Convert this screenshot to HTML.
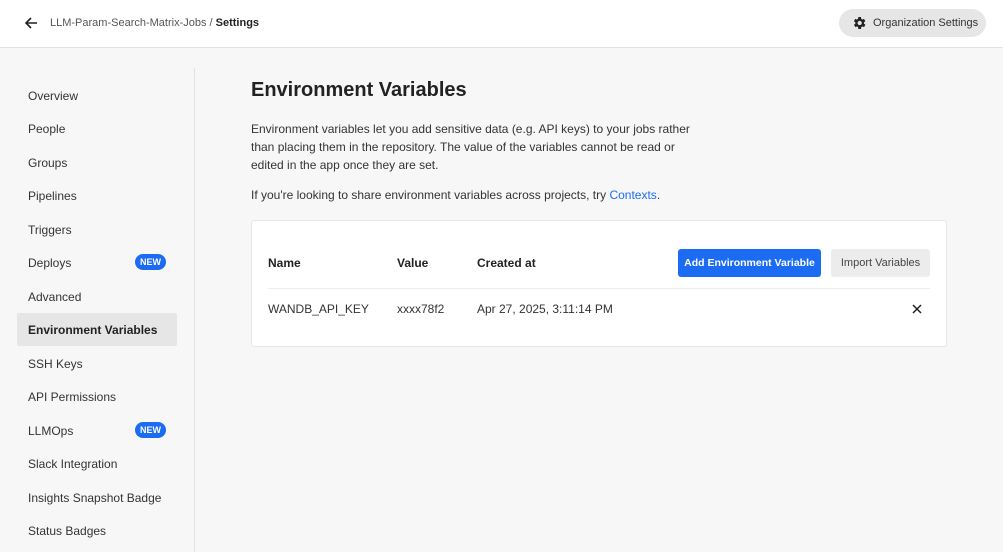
<!DOCTYPE html><html><head><style>
*{margin:0;padding:0;box-sizing:border-box}
body{width:1003px;height:552px;overflow:hidden;background:#f7f7f7;font-family:"Liberation Sans",sans-serif;color:#222;position:relative}
.hdr{position:absolute;left:0;top:0;width:1003px;height:48px;background:#fff;border-bottom:1px solid #e2e2e2}
.bc{position:absolute;left:50px;top:17px;font-size:11px;color:#555}
.bc b{color:#222}
.org{position:absolute;left:839px;top:9px;width:147px;height:28px;border-radius:14px;background:#e6e6e6;font-size:11px;color:#333;padding:8px 0 0 34px}
.side{position:absolute;left:194px;top:68px;width:1px;height:484px;background:#e2e2e2}
.it{position:absolute;left:17px;width:160px;height:33px;font-size:12px;color:#333;padding:10px 0 0 11px}
.it.a{background:#e6e6e6;font-weight:bold;color:#222;border-radius:2px}
.new{position:absolute;left:118px;top:8px;width:31px;height:16px;border-radius:8px;background:#1b6cf2;color:#fff;font-size:9px;font-weight:bold;text-align:center;line-height:16px}
h1{position:absolute;left:251px;top:79px;font-size:20px;font-weight:bold;color:#222}
.p{position:absolute;left:251px;font-size:12px;line-height:18px;color:#333;width:445px}
.p a{color:#1b6cf2;text-decoration:none}
.card{position:absolute;left:251px;top:220px;width:696px;height:127px;background:#fff;border:1px solid #e6e6e6;border-radius:3px}
.t{position:absolute;font-size:12px;color:#333}
.th{font-weight:bold;color:#222}
.btn1{position:absolute;left:426px;top:28px;width:143px;height:28px;background:#1b6cf2;border-radius:3px;color:#fff;font-size:10.5px;font-weight:bold;text-align:center;line-height:28px}
.btn2{position:absolute;left:579px;top:28px;width:99px;height:28px;background:#ececec;border-radius:3px;color:#444;font-size:11px;text-align:center;line-height:28px}
.ln{position:absolute;left:16px;top:67px;width:662px;height:1px;background:#eee}
</style></head><body>
<div class="hdr">
<svg style="position:absolute;left:24px;top:16px" width="14" height="14" viewBox="0 0 14 14"><path d="M13 7H2M7 2L2 7l5 5" fill="none" stroke="#222" stroke-width="1.6"/></svg>
<div class="bc">LLM-Param-Search-Matrix-Jobs / <b>Settings</b></div>
<div class="org"><svg style="position:absolute;left:12px;top:6px" width="16" height="16" viewBox="0 0 24 24"><path fill="#222" d="M19.4 13a7.5 7.5 0 000-2l2.1-1.6-2-3.5-2.5 1a7.3 7.3 0 00-1.7-1L15 3h-4l-.4 2.9a7.3 7.3 0 00-1.7 1l-2.5-1-2 3.5L6.6 11a7.5 7.5 0 000 2l-2.1 1.6 2 3.5 2.5-1a7.3 7.3 0 001.7 1L11 21h4l.4-2.9a7.3 7.3 0 001.7-1l2.5 1 2-3.5zM13 15.2a3.2 3.2 0 110-6.4 3.2 3.2 0 010 6.4z"/></svg>Organization Settings</div>
</div>
<div class="side"></div>
<div class="it" style="top:79px">Overview</div>
<div class="it" style="top:112px">People</div>
<div class="it" style="top:146px">Groups</div>
<div class="it" style="top:179px">Pipelines</div>
<div class="it" style="top:213px">Triggers</div>
<div class="it" style="top:246px">Deploys<span class="new">NEW</span></div>
<div class="it" style="top:280px">Advanced</div>
<div class="it a" style="top:313px">Environment Variables</div>
<div class="it" style="top:347px">SSH Keys</div>
<div class="it" style="top:380px">API Permissions</div>
<div class="it" style="top:414px">LLMOps<span class="new">NEW</span></div>
<div class="it" style="top:447px">Slack Integration</div>
<div class="it" style="top:481px">Insights Snapshot Badge</div>
<div class="it" style="top:514px">Status Badges</div>
<h1>Environment Variables</h1>
<div class="p" style="top:120px">Environment variables let you add sensitive data (e.g. API keys) to your jobs rather than placing them in the repository. The value of the variables cannot be read or edited in the app once they are set.</div>
<div class="p" style="top:186px">If you're looking to share environment variables across projects, try <a>Contexts</a>.</div>
<div class="card">
<div class="t th" style="left:16px;top:35px">Name</div>
<div class="t th" style="left:145px;top:35px">Value</div>
<div class="t th" style="left:225px;top:35px">Created at</div>
<div class="btn1">Add Environment Variable</div>
<div class="btn2">Import Variables</div>
<div class="ln"></div>
<div class="t" style="left:16px;top:81px">WANDB_API_KEY</div>
<div class="t" style="left:145px;top:81px">xxxx78f2</div>
<div class="t" style="left:225px;top:81px">Apr 27, 2025, 3:11:14 PM</div>
<svg style="position:absolute;left:660px;top:83px" width="10" height="10" viewBox="0 0 10 10"><path d="M1 1l8 8M9 1L1 9" stroke="#222" stroke-width="1.5"/></svg>
</div>
</body></html>
